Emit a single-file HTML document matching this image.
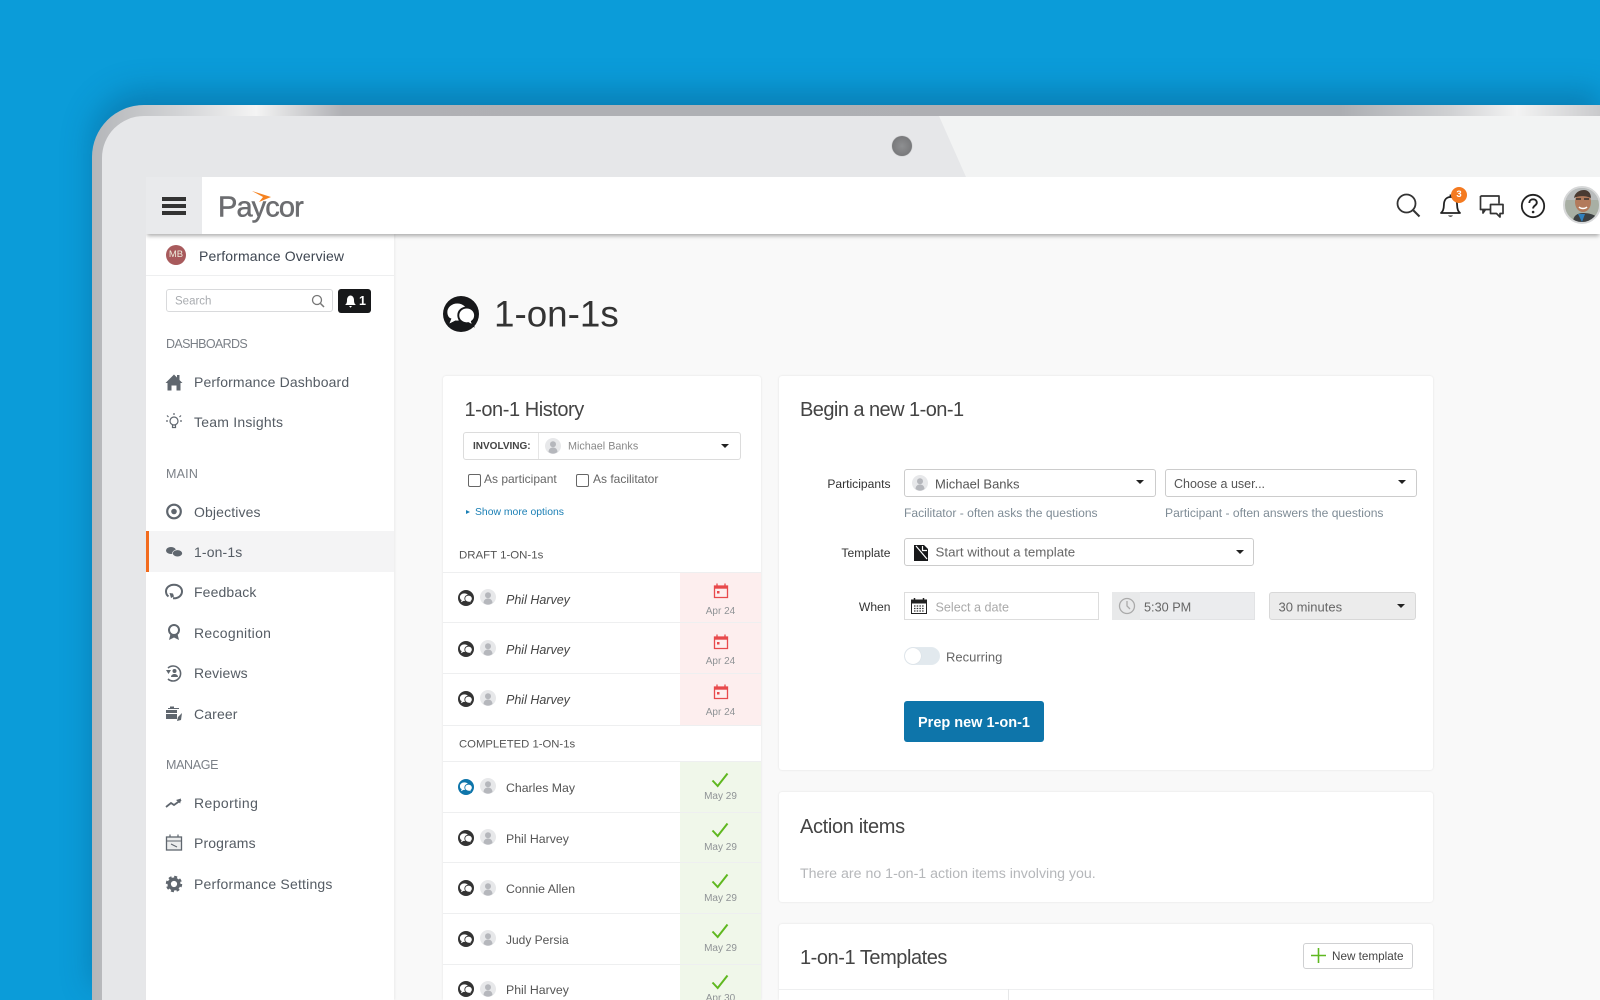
<!DOCTYPE html>
<html><head><meta charset="utf-8"><title>1-on-1s</title>
<style>
html,body{margin:0;padding:0;width:1600px;height:1000px;overflow:hidden}
body{position:relative;font-family:"Liberation Sans",sans-serif;background:#0b9cd9;color:#444}
.a{position:absolute;box-sizing:border-box}
.t{position:absolute;white-space:nowrap;line-height:1;transform:translateY(-50%)}
#wrap{position:absolute;left:0;top:0;width:1600px;height:1000px;overflow:hidden;filter:blur(.35px)}
.card{position:absolute;background:#fff;box-shadow:0 0 2px rgba(0,0,0,.1);border-radius:3px;box-sizing:border-box}
.nav{font-size:14px;color:#555c64;left:194px;letter-spacing:.13px}
.sec{font-size:12.5px;color:#7b8087;left:166px}
.sel{position:absolute;background:#fff;border:1px solid #ccc;border-radius:3px;box-sizing:border-box}
.car{position:absolute;width:0;height:0;border-left:4px solid transparent;border-right:4px solid transparent;border-top:4px solid #222}
.ln{position:absolute;left:443px;width:318px;height:1px;background:#eeeff0}
.nm{font-size:12.3px;color:#555;left:506px}
.dt{font-size:10px;color:#8f9396;left:680px;width:81px;text-align:center;transform:translateY(-50%)}
.h{font-size:20px;color:#444;letter-spacing:-.45px}
.lb{font-size:12.1px;color:#333;text-align:right;width:100.5px;left:790px}
.hint{font-size:12.1px;color:#7f8c96}
svg{position:absolute;overflow:visible}
</style></head>
<body>
<svg width="0" height="0" style="position:absolute">
<defs>
<symbol id="ch" viewBox="0 0 24 24"><circle cx="12" cy="12" r="12" fill="currentColor"/><path d="M9.500 5c3.700 0 6.700 2.500 6.700 5.700s-3 5.700-6.700 5.700l-1.200-.1-4 2 1.300-3.300C4 14.900 2.900 13 2.900 10.700 2.900 7.500 5.900 5 9.500 5z" fill="#fff"/><path d="M15.800 7.700c3.100 0 5.600 2.300 5.600 5.200 0 1.700-.8 3.200-2.100 4.100l.8 2.800-3.300-1.700-1 .1c-3.100 0-5.600-2.300-5.600-5.300s2.500-5.200 5.600-5.200z" fill="#fff" stroke="currentColor" stroke-width="1.300"/></symbol>
<symbol id="av" viewBox="0 0 16 16"><circle cx="8" cy="8" r="8" fill="#e7e8ea"/><circle cx="8" cy="6.200" r="3" fill="#b5b7bc"/><path d="M3.500 14c.2-3 2-4.500 4.500-4.500s4.300 1.500 4.500 4.500c-1.200 1-2.800 1.600-4.500 1.600S4.700 15 3.500 14z" fill="#b5b7bc"/></symbol>
<symbol id="cal" viewBox="0 0 16 16"><path d="M1.500 3h13v11.500h-13z" fill="none" stroke="#e8494b" stroke-width="1.300"/><path d="M1.500 2.500h13v3.200h-13z" fill="#e8494b"/><path d="M4 .5v3M12 .5v3" stroke="#e8494b" stroke-width="1.300"/><rect x="4" y="8" width="2.500" height="2.500" fill="#e8494b"/></symbol>
<symbol id="ck" viewBox="0 0 18 16"><path d="M1.500 8.500l5.200 5.500L16.500 1.500" fill="none" stroke="#5fb820" stroke-width="2"/></symbol>
</defs>
</svg>
<div id="wrap">
<!-- bezel -->
<div class="a" style="left:92px;top:105px;width:1508px;height:895px;border-radius:52px 0 0 0;background:linear-gradient(90deg,#b4b6b9 0,#d5d6d8 94px,#f4f4f4 164px,#b0b1b5 250px,#acaeb2 1248px,#cfd0d2 1357px,#f3f3f3 1425px,#c9cacc 1508px);box-shadow:0 -14px 30px rgba(5,70,110,.34)"></div>
<div class="a" style="left:102px;top:116px;width:1498px;height:884px;border-radius:42px 0 0 0;background:#e6e7e9"></div>
<div class="a" style="left:939px;top:116px;width:661px;height:61px;background:#f2f3f3;clip-path:polygon(0 0,100% 0,100% 100%,27px 100%)"></div>
<div class="a" style="left:892px;top:136px;width:20px;height:20px;border-radius:50%;background:radial-gradient(circle at 50% 50%,#8e8f91,#6f7072);box-shadow:0 0 1px #999"></div>

<!-- main bg -->
<div class="a" style="left:146px;top:234px;width:1454px;height:766px;background:#f9f9f9"></div>
<!-- sidebar -->
<div class="a" style="left:146px;top:234px;width:248px;height:766px;background:#fff;box-shadow:1px 0 2px rgba(0,0,0,.06)"></div>
<div class="a" style="left:146px;top:275px;width:248px;height:1px;background:#eeeff0"></div>
<!-- header -->
<div class="a" style="left:146px;top:177px;width:1454px;height:57px;background:#fff;box-shadow:0 3px 4px -1px rgba(0,0,0,.32);clip-path:inset(0 0 -8px 0)"></div>
<div class="a" style="left:146px;top:177px;width:56px;height:57px;background:#e9eaec"></div>
<div class="a" style="left:162px;top:197px;width:24px;height:3.500px;background:#333"></div>
<div class="a" style="left:162px;top:204px;width:24px;height:3.500px;background:#333"></div>
<div class="a" style="left:162px;top:211px;width:24px;height:3.500px;background:#333"></div>
<div class="t" style="left:218px;top:208px;font-size:29px;color:#6c6d70;letter-spacing:-.9px;-webkit-text-stroke:.5px #6c6d70">Paycor</div>
<svg style="left:0;top:0" width="1600" height="1000"><path d="M252 191L271 197 259 202 263 197z" fill="#f58220"/></svg>

<!-- header icons -->
<svg style="left:1396px;top:193px" width="26" height="26" viewBox="0 0 26 26"><circle cx="10.500" cy="10.500" r="9" fill="none" stroke="#333" stroke-width="1.800"/><path d="M17 17l6.500 6.500" stroke="#333" stroke-width="2"/></svg>
<svg style="left:1438px;top:193px" width="26" height="26" viewBox="0 0 26 26"><path d="M3 20c2-1.500 2.800-3.500 2.900-8C6 7 8.500 4 12.500 4s6.500 3 6.600 8c.1 4.500.9 6.500 2.900 8z" fill="#fff" stroke="#222" stroke-width="1.800" stroke-linejoin="round"/><path d="M10 22.500c1 1.600 4 1.600 5 0z" fill="#222"/><path d="M12.500 1.500v3" stroke="#222" stroke-width="1.800"/></svg>
<div class="a" style="left:1451px;top:187px;width:16px;height:16px;border-radius:50%;background:#f47a20;color:#fff;font:bold 9.500px/16px 'Liberation Sans',sans-serif;text-align:center">3</div>
<svg style="left:1479px;top:194px" width="26" height="26" viewBox="0 0 26 26"><path d="M1.500 2h18.500v7.500M12 15.500H6.500L4 19v-3.500H1.500z" fill="none" stroke="#333" stroke-width="1.700" stroke-linejoin="round"/><path d="M1.500 2v13.500" stroke="#333" stroke-width="1.700"/><path d="M11.500 10.500h12.500v9h-3v3.500l-3.500-3.500h-6z" fill="#fff" stroke="#333" stroke-width="1.700" stroke-linejoin="round"/></svg>
<svg style="left:1520px;top:193px" width="26" height="26" viewBox="0 0 26 26"><circle cx="13" cy="13" r="11.200" fill="none" stroke="#222" stroke-width="1.800"/><path d="M9.300 10c0-2.300 1.700-3.700 3.800-3.700s3.700 1.400 3.700 3.400c0 2.800-3.700 2.800-3.700 5.800" fill="none" stroke="#222" stroke-width="1.900"/><circle cx="13.100" cy="19" r="1.300" fill="#222"/></svg>
<div class="a" style="left:1563px;top:186px;width:37px;height:38px;overflow:hidden"><div class="a" style="left:0;top:0;width:38px;height:38px;border-radius:50%;background:#ccc;overflow:hidden;border:2px solid #d7d8d9">
<svg style="left:0;top:0" width="34" height="34" viewBox="0 0 34 34"><rect width="34" height="34" fill="#a8afa4"/><rect x="0" y="0" width="34" height="12" fill="#b9bcbd"/><path d="M8 34c0-6 4-9 10-9s16 2 16 9z" fill="#3d4042"/><path d="M13 26l4 8 3-8z" fill="#2f7fbd"/><ellipse cx="18" cy="14" rx="8" ry="10" fill="#b27a5c"/><path d="M9 10c1-6 6-8 10-8s7 3 7 8c-4-2-12-3-17 0z" fill="#4a3a32"/><path d="M11 11h5M19 11h5" stroke="#38302c" stroke-width="1.500"/><path d="M14 19c2 2 6 2 8 0" stroke="#fff" stroke-width="1.500" fill="none"/></svg></div></div>

<!-- sidebar content -->
<div class="a" style="left:166px;top:245px;width:20px;height:20px;border-radius:50%;background:#a85a5c;color:#eed;font:9.500px/20px 'Liberation Sans',sans-serif;text-align:center">MB</div>
<div class="t" style="left:199px;top:255.500px;font-size:14px;letter-spacing:.14px;color:#3e4651">Performance Overview</div>
<div class="a" style="left:166px;top:289px;width:167px;height:23px;border:1px solid #d9dadc;border-radius:3px"></div>
<div class="t" style="left:175px;top:302px;font-size:11.500px;color:#a9acb0">Search</div>
<svg style="left:311px;top:294px" width="14" height="14" viewBox="0 0 14 14"><circle cx="6" cy="6" r="4.500" fill="none" stroke="#777" stroke-width="1.300"/><path d="M9.500 9.500l3.500 3.500" stroke="#777" stroke-width="1.500"/></svg>
<div class="a" style="left:338px;top:289px;width:33px;height:24px;background:#17181a;border-radius:3px"></div>
<svg style="left:344px;top:294px" width="13" height="14" viewBox="0 0 13 14"><path d="M1 11c1.500-1 2-2.500 2-5 0-2.500 1.500-4.500 3.500-4.500S10 3.500 10 6c0 2.500.5 4 2 5z" fill="#fff"/><path d="M5 12h3l-1.500 1.800z" fill="#fff"/></svg>
<div class="t" style="left:359px;top:301px;font-size:12.500px;font-weight:bold;color:#fff">1</div>

<div class="t sec" style="top:344px;letter-spacing:-.65px">DASHBOARDS</div>
<div class="t nav" style="top:382px">Performance Dashboard</div>
<div class="t nav" style="top:422px;letter-spacing:.22px">Team Insights</div>
<div class="t sec" style="top:473.500px;letter-spacing:.2px">MAIN</div>
<div class="t nav" style="top:511.500px">Objectives</div>
<div class="a" style="left:146px;top:531px;width:248px;height:41px;background:#f4f4f5;border-left:3px solid #f26b1d"></div>
<div class="t nav" style="top:552px">1-on-1s</div>
<div class="t nav" style="top:592px">Feedback</div>
<div class="t nav" style="top:632.500px;letter-spacing:.3px">Recognition</div>
<div class="t nav" style="top:673px">Reviews</div>
<div class="t nav" style="top:714px">Career</div>
<div class="t sec" style="top:764.500px;letter-spacing:-.35px">MANAGE</div>
<div class="t nav" style="top:803px;letter-spacing:.4px">Reporting</div>
<div class="t nav" style="top:843px">Programs</div>
<div class="t nav" style="top:884px;letter-spacing:.2px">Performance Settings</div>

<svg style="left:0;top:0" width="1600" height="1000">
<g fill="#5f666e" stroke="none">
<path d="M165.500 383l8.500-8.500 3 3v-2.500h2.500v5l3 3h-2v7.500h-4v-5h-5v5h-4v-7.500z"/>
</g>
<g fill="none" stroke="#5f666e" stroke-width="1.200">
<circle cx="174" cy="421" r="4"/><path d="M172.500 425v2.500h3V425M174 413v2M167 415.500l1.500 1.500M181 415.500l-1.500 1.500M166 421h2M180 421h2"/>
<circle cx="174" cy="511.500" r="6.800" stroke-width="2.200"/>
<path d="M168.500 596.500C166.500 595 166 593 166 591.500c0-3.800 3.500-6.800 8-6.800s8 3 8 6.800-3.500 6.800-8 6.800h-1" stroke-width="2"/>
<circle cx="174" cy="630" r="5" stroke-width="2"/>
<path d="M168 668a7.500 7.500 0 1 1 0 11" stroke-width="1.600"/>
<path d="M166 807l5-4 3 2 7-5" stroke-width="1.800"/>
<rect x="166.500" y="837" width="15" height="13" fill="#eceded" stroke-width="1.300"/><path d="M170 834.500v3M178 834.500v3" /><path d="M166.500 841h15M171 844l6 3" stroke-width="1"/>
<circle cx="174" cy="884" r="4.800" stroke-width="3.400"/><circle cx="174" cy="884" r="7.200" stroke-width="2" stroke-dasharray="3 2.650"/>
</g>
<g fill="#5f666e">
<circle cx="174" cy="511.500" r="2.800"/>
<ellipse cx="171" cy="550.500" rx="5" ry="3.500"/>
<ellipse cx="177.500" cy="553.300" rx="5" ry="3.500" stroke="#f4f4f5" stroke-width=".6"/>
<path d="M169.500 593l1.500 5 3-1.500-1-3z"/>
<path d="M170.500 634l-1.500 6 5-2.500 5 2.500-1.500-6z"/>
<path d="M166 670l5 0-2.500 4z"/><circle cx="174.500" cy="671" r="2"/><path d="M171 677c0-1.800 1.500-3 3.500-3s3.500 1.200 3.500 3z"/>
<path d="M166 710h11v3h-11zM166 714h11v5h-11zM170 706.500h4v1.500h5v1h-11v-1h2z"/>
<path d="M178 717l4-4-1 7-4 1z"/>
<path d="M176 800l5-1.500-.8 5z"/>
</g>
</svg>

<!-- page title -->
<svg style="left:443px;top:296px" width="36" height="36" color="#17181a"><use href="#ch" width="36" height="36"/></svg>
<div class="t" style="left:494px;top:314.500px;font-size:36.800px;color:#333">1-on-1s</div>

<!-- history card -->
<div class="card" style="left:443px;top:376px;width:318px;height:624px;border-radius:3px 3px 0 0"></div>
<div class="t h" style="left:464.500px;top:410px">1-on-1 History</div>
<div class="sel" style="left:463px;top:432px;width:278px;height:28px;border-color:#dcdcdc"></div>
<div class="a" style="left:538px;top:433px;width:1px;height:26px;background:#e6e6e6"></div>
<div class="t" style="left:473px;top:447px;font-size:10px;font-weight:bold;color:#444">INVOLVING:</div>
<svg style="left:545px;top:438px" width="16" height="16"><use href="#av" width="16" height="16"/></svg>
<div class="t" style="left:568px;top:447px;font-size:10.800px;color:#888">Michael Banks</div>
<div class="car" style="left:721px;top:444px"></div>
<div class="a" style="left:468px;top:474px;width:13px;height:13px;border:1px solid #666;border-radius:2px;background:#fff"></div>
<div class="t" style="left:484px;top:479px;font-size:12px;color:#666">As participant</div>
<div class="a" style="left:576px;top:474px;width:13px;height:13px;border:1px solid #666;border-radius:2px;background:#fff"></div>
<div class="t" style="left:593px;top:479px;font-size:12px;color:#666">As facilitator</div>
<div class="a" style="left:466px;top:510px;width:0;height:0;border-left:4px solid #1a7fb5;border-top:2px solid transparent;border-bottom:2px solid transparent"></div>
<div class="t" style="left:475px;top:512.500px;font-size:10.400px;color:#1a7fb5">Show more options</div>
<div class="t" style="left:459px;top:555.500px;font-size:11.450px;color:#555">DRAFT 1-ON-1s</div>

<div class="a" style="left:680px;top:572px;width:81px;height:153px;background:#fdeeee"></div>
<div class="a" style="left:680px;top:761px;width:81px;height:239px;background:#f0f7ea"></div>
<div class="ln" style="top:572px"></div><div class="ln" style="top:622px"></div><div class="ln" style="top:673px"></div><div class="ln" style="top:725px"></div><div class="ln" style="top:761px"></div><div class="ln" style="top:812px"></div><div class="ln" style="top:862px"></div><div class="ln" style="top:913px"></div><div class="ln" style="top:964px"></div>

<svg style="left:458px;top:590px" width="16" height="16" color="#333"><use href="#ch" width="16" height="16"/></svg>
<svg style="left:480px;top:589px" width="16" height="16"><use href="#av" width="16" height="16"/></svg>
<div class="t nm" style="top:599.500px;font-size:12.500px;font-style:italic;color:#444">Phil Harvey</div>
<svg style="left:713px;top:583px" width="16" height="16"><use href="#cal" width="16" height="16"/></svg>
<div class="t dt" style="top:611.500px">Apr 24</div>

<svg style="left:458px;top:641px" width="16" height="16" color="#333"><use href="#ch" width="16" height="16"/></svg>
<svg style="left:480px;top:640px" width="16" height="16"><use href="#av" width="16" height="16"/></svg>
<div class="t nm" style="top:650px;font-size:12.500px;font-style:italic;color:#444">Phil Harvey</div>
<svg style="left:713px;top:634px" width="16" height="16"><use href="#cal" width="16" height="16"/></svg>
<div class="t dt" style="top:662px">Apr 24</div>

<svg style="left:458px;top:691px" width="16" height="16" color="#333"><use href="#ch" width="16" height="16"/></svg>
<svg style="left:480px;top:690px" width="16" height="16"><use href="#av" width="16" height="16"/></svg>
<div class="t nm" style="top:700px;font-size:12.500px;font-style:italic;color:#444">Phil Harvey</div>
<svg style="left:713px;top:684px" width="16" height="16"><use href="#cal" width="16" height="16"/></svg>
<div class="t dt" style="top:712.500px">Apr 24</div>

<div class="t" style="left:459px;top:745px;font-size:11.300px;color:#555">COMPLETED 1-ON-1s</div>

<svg style="left:458px;top:779px" width="16" height="16" color="#0e75aa"><use href="#ch" width="16" height="16"/></svg>
<svg style="left:480px;top:778px" width="16" height="16"><use href="#av" width="16" height="16"/></svg>
<div class="t nm" style="top:788px">Charles May</div>
<svg style="left:711px;top:772px" width="18" height="16"><use href="#ck" width="18" height="16"/></svg>
<div class="t dt" style="top:797px">May 29</div>

<svg style="left:458px;top:830px" width="16" height="16" color="#333"><use href="#ch" width="16" height="16"/></svg>
<svg style="left:480px;top:829px" width="16" height="16"><use href="#av" width="16" height="16"/></svg>
<div class="t nm" style="top:839px">Phil Harvey</div>
<svg style="left:711px;top:822px" width="18" height="16"><use href="#ck" width="18" height="16"/></svg>
<div class="t dt" style="top:848px">May 29</div>

<svg style="left:458px;top:880px" width="16" height="16" color="#333"><use href="#ch" width="16" height="16"/></svg>
<svg style="left:480px;top:880px" width="16" height="16"><use href="#av" width="16" height="16"/></svg>
<div class="t nm" style="top:889px">Connie Allen</div>
<svg style="left:711px;top:873px" width="18" height="16"><use href="#ck" width="18" height="16"/></svg>
<div class="t dt" style="top:898.500px">May 29</div>

<svg style="left:458px;top:931px" width="16" height="16" color="#333"><use href="#ch" width="16" height="16"/></svg>
<svg style="left:480px;top:930px" width="16" height="16"><use href="#av" width="16" height="16"/></svg>
<div class="t nm" style="top:940px;font-size:12px">Judy Persia</div>
<svg style="left:711px;top:923px" width="18" height="16"><use href="#ck" width="18" height="16"/></svg>
<div class="t dt" style="top:949px">May 29</div>

<svg style="left:458px;top:981px" width="16" height="16" color="#333"><use href="#ch" width="16" height="16"/></svg>
<svg style="left:480px;top:981px" width="16" height="16"><use href="#av" width="16" height="16"/></svg>
<div class="t nm" style="top:990px">Phil Harvey</div>
<svg style="left:711px;top:974px" width="18" height="16"><use href="#ck" width="18" height="16"/></svg>
<div class="a" style="left:680px;width:81px;top:994px;height:6px;overflow:hidden;text-align:center;font-size:10px;line-height:10px;color:#8f9396">Apr 30</div>

<!-- begin card -->
<div class="card" style="left:779px;top:376px;width:654px;height:394px"></div>
<div class="t h" style="left:800px;top:410px;letter-spacing:-.55px">Begin a new 1-on-1</div>
<div class="t lb" style="top:484px">Participants</div>
<div class="sel" style="left:904px;top:469px;width:252px;height:28px"></div>
<svg style="left:912px;top:475px" width="16" height="16"><use href="#av" width="16" height="16"/></svg>
<div class="t" style="left:935px;top:483.500px;font-size:13px;color:#555">Michael Banks</div>
<div class="car" style="left:1136px;top:480px"></div>
<div class="sel" style="left:1165px;top:469px;width:252px;height:28px"></div>
<div class="t" style="left:1174px;top:483.500px;font-size:12.500px;color:#555">Choose a user...</div>
<div class="car" style="left:1398px;top:480px"></div>
<div class="t hint" style="left:904px;top:512.500px">Facilitator - often asks the questions</div>
<div class="t hint" style="left:1165px;top:512.500px">Participant - often answers the questions</div>

<div class="t lb" style="top:552.500px">Template</div>
<div class="sel" style="left:904px;top:538px;width:350px;height:28px"></div>
<svg style="left:913px;top:545px" width="16" height="16" viewBox="0 0 16 16"><path d="M1 0h10l4 4v12H1z" fill="#17181a"/><path d="M3 1l11 13M9.500 1v4.500H14" stroke="#fff" stroke-width="1.200" fill="none"/></svg>
<div class="t" style="left:935.500px;top:552px;font-size:13.300px;color:#666">Start without a template</div>
<div class="car" style="left:1236px;top:550px"></div>

<div class="t lb" style="top:607px">When</div>
<div class="a" style="left:904px;top:592px;width:195px;height:28px;background:#fff;border:1px solid #ddd"></div>
<svg style="left:911px;top:598px" width="16" height="16" viewBox="0 0 16 16"><rect x=".5" y="2" width="15" height="13.500" fill="#fff" stroke="#222"/><rect x="0" y="2" width="16" height="3.500" fill="#222"/><path d="M3.500 0v4M12.500 0v4" stroke="#222" stroke-width="1.500"/><path d="M3 8h10M3 10.500h10M3 13h10" stroke="#333" stroke-dasharray="1.500 1.200" stroke-width="1.300"/></svg>
<div class="t" style="left:935.500px;top:607.500px;font-size:12.600px;color:#aaa">Select a date</div>
<div class="a" style="left:1112px;top:592px;width:143px;height:28px;background:#ebecee;border:1px solid #e2e3e5"></div>
<div class="a" style="left:1112px;top:592px;width:28px;height:28px;background:#e8e9ea"></div>
<svg style="left:1118px;top:597px" width="18" height="18" viewBox="0 0 18 18"><circle cx="9" cy="9" r="7.500" fill="none" stroke="#aaa" stroke-width="1.300"/><path d="M9 4v5l3 3" fill="none" stroke="#aaa" stroke-width="1.300"/></svg>
<div class="t" style="left:1144px;top:607.500px;font-size:12.700px;color:#666">5:30 PM</div>
<div class="a" style="left:1269px;top:592px;width:147px;height:28px;background:#ececec;border:1px solid #d8d8d8;border-radius:3px"></div>
<div class="t" style="left:1278.500px;top:606.500px;font-size:13px;color:#666">30 minutes</div>
<div class="car" style="left:1397px;top:604px"></div>

<div class="a" style="left:904px;top:647px;width:36px;height:18px;border-radius:9px;background:#e2e9ee;border:1px solid #e3eaef"></div>
<div class="a" style="left:905px;top:648px;width:16px;height:16px;border-radius:50%;background:#fff;box-shadow:0 0 1px #c8cdd2"></div>
<div class="t" style="left:946px;top:656.500px;font-size:13px;color:#666">Recurring</div>
<div class="a" style="left:904px;top:701px;width:140px;height:41px;background:#0e75aa;border-radius:3px"></div>
<div class="t" style="left:904px;width:140px;text-align:center;top:722.500px;font-size:14.500px;font-weight:bold;color:#fff">Prep new 1-on-1</div>

<!-- action items -->
<div class="card" style="left:779px;top:792px;width:654px;height:110px"></div>
<div class="t h" style="left:800px;top:826.500px;letter-spacing:-.35px">Action items</div>
<div class="t" style="left:800px;top:873.500px;font-size:14.200px;color:#b5b7ba">There are no 1-on-1 action items involving you.</div>

<!-- templates -->
<div class="card" style="left:779px;top:924px;width:654px;height:76px;border-radius:3px 3px 0 0"></div>
<div class="t h" style="left:800px;top:958px">1-on-1 Templates</div>
<div class="a" style="left:1303px;top:943px;width:110px;height:26px;border:1px solid #cfd0d2;border-radius:3px;background:#fff"></div>
<svg style="left:1311px;top:948px" width="15" height="15"><path d="M7.500 0v15M0 7.500h15" stroke="#5fb820" stroke-width="1.600"/></svg>
<div class="t" style="left:1332px;top:957px;font-size:11.700px;color:#444">New template</div>
<div class="a" style="left:779px;top:989px;width:654px;height:1px;background:#eeeff0"></div>
<div class="a" style="left:1008px;top:989px;width:1px;height:11px;background:#e6e7e8"></div>
</div>
</body></html>
